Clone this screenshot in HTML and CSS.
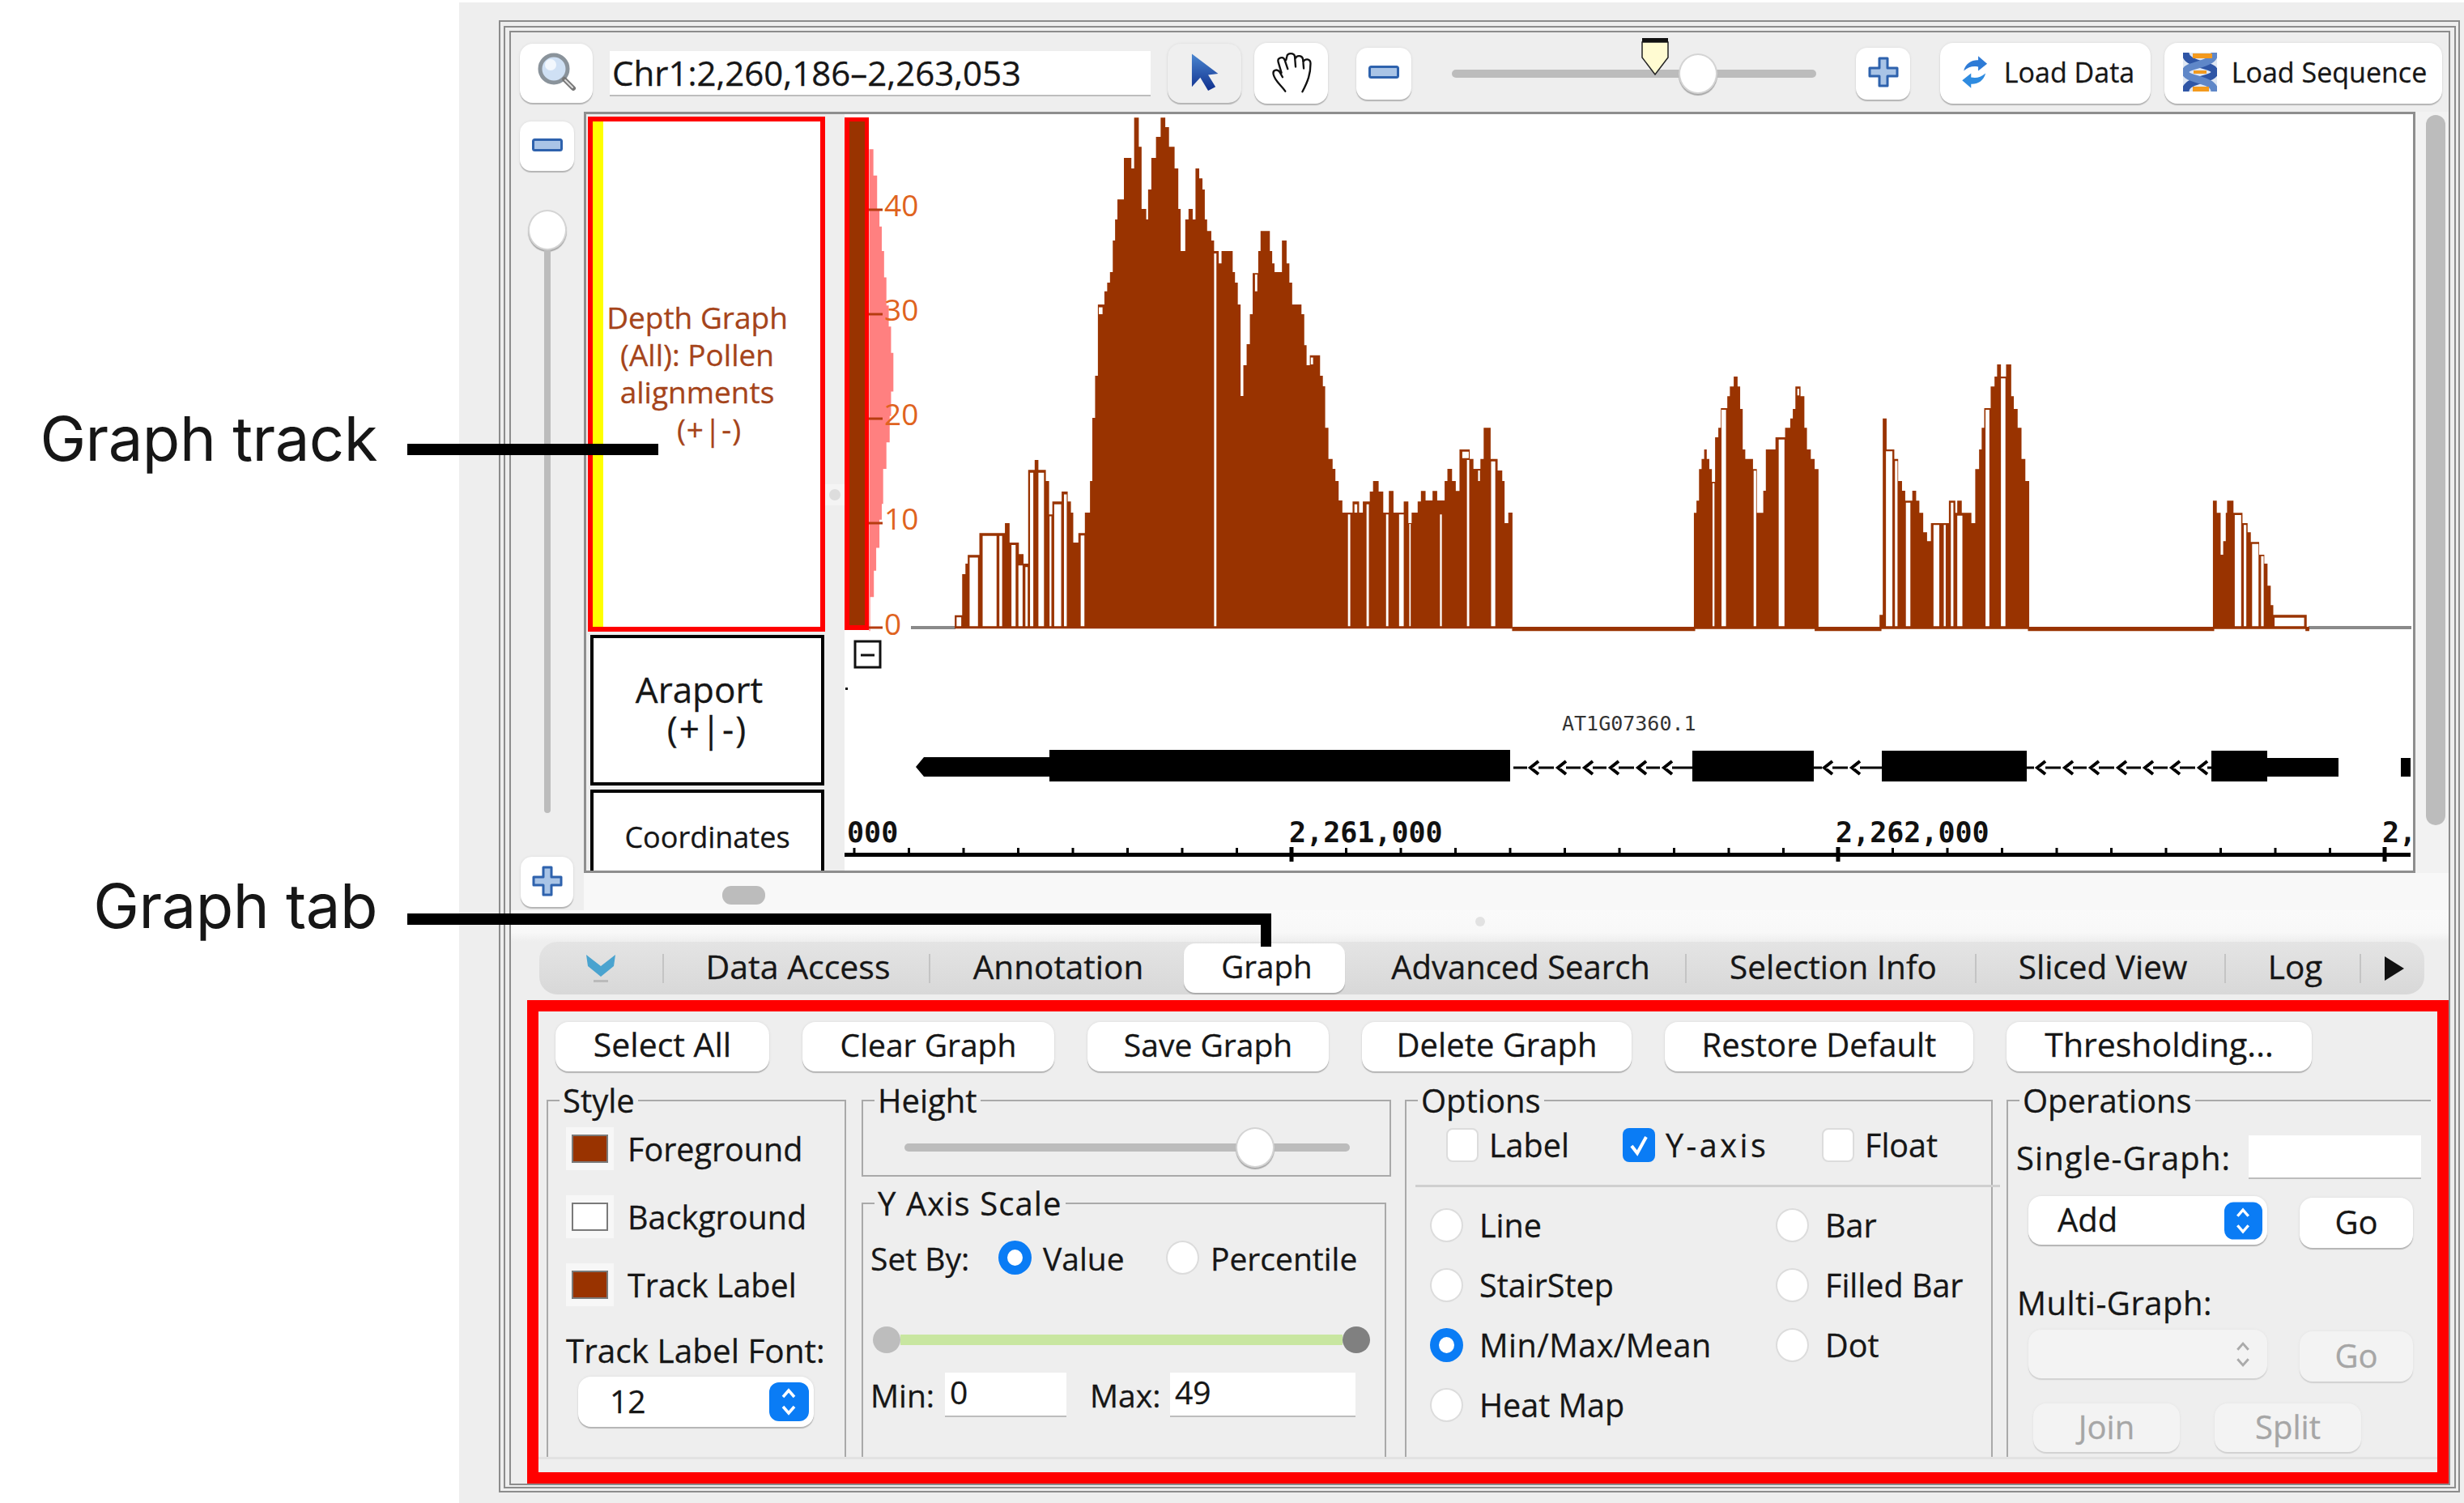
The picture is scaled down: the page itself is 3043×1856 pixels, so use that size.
FILE: index.html
```html
<!DOCTYPE html>
<html lang="en">
<head>
    <meta charset="UTF-8">
    <title>Graph tab</title>
    <link rel="stylesheet" href="styles.css">
</head>
<body>
    <div class="notes">
        <div class="note note-track">Graph track</div>
        <div class="note note-tab">Graph tab</div>
    </div>

    <div class="app">
        <div class="frame-outer">
            <div class="frame-mid">
                <div class="frame-inner">

                    <div class="toolbar">
                        <button class="btn btn-zoom">
                            <svg width="52" height="48" viewBox="0 0 52 48">
                                <circle cx="23" cy="20" r="17" fill="#cfe0f4" stroke="#8a939b" stroke-width="5"/>
                                <circle cx="19" cy="15" r="7" fill="#f2f7fd"/>
                                <path d="M36 33l11 11" stroke="#777" stroke-width="6" stroke-linecap="round"/>
                                <path d="M37 34l9 9" stroke="#ddd" stroke-width="2" stroke-linecap="round"/>
                            </svg>
                        </button>
                        <div class="text-field field-location">Chr1:2,260,186–2,263,053</div>
                        <button class="btn btn-pointer">
                            <svg width="38" height="48" viewBox="120 75 115 148">
                                <defs>
                                    <linearGradient id="pointerFill" x1="0" y1="0" x2="0" y2="1">
                                        <stop offset="0" stop-color="#4a86d0"/>
                                        <stop offset="1" stop-color="#10308e"/>
                                    </linearGradient>
                                </defs>
                                <path d="M128 80V205L160 170 190 220 218 205 190 160 228 155Z" fill="url(#pointerFill)"/>
                            </svg>
                        </button>
                        <button class="btn btn-hand">
                            <svg width="54" height="52" viewBox="415 72 160 155">
                                <path d="M472 220C456 196 432 182 428 156 426 140 444 138 452 150L462 168M458 152L446 112C442 96 465 90 470 105L481 138M475 105L478 92C480 78 505 78 507 92L510 130M510 98C515 86 535 88 537 102L540 136M538 112C545 98 565 100 565 118 565 156 556 182 535 222" fill="none" stroke="#111" stroke-width="7" stroke-linecap="round"/>
                            </svg>
                        </button>
                        <button class="btn btn-step btn-zoom-out">
                            <svg class="icon-minus" width="38" height="16" viewBox="0 0 38 16"><rect x="1.5" y="1.5" width="35" height="13" rx="2" fill="#a9c4e6" stroke="#2e62ad" stroke-width="3"/></svg>
                        </button>
                        <div class="zoom-slider">
                            <div class="slider-track"></div>
                            <svg class="zoom-marker" width="34" height="46" viewBox="0 0 34 46"><path d="M1 5H33V24L17 45 1 24Z" fill="#fffbd2" stroke="#222" stroke-width="1.5"/><rect x="1" width="32" height="5" fill="#111"/></svg>
                            <div class="slider-thumb zoom-thumb"></div>
                        </div>
                        <button class="btn btn-step btn-zoom-in">
                            <svg class="icon-plus" width="38" height="38" viewBox="0 0 38 38"><path d="M14 2H24V14H36V24H24V36H14V24H2V14H14Z" fill="#a9c4e6" stroke="#2e62ad" stroke-width="3" stroke-linejoin="round"/></svg>
                        </button>
                        <button class="btn btn-load-data">
                            <svg width="33" height="42" viewBox="130 90 105 130">
                                <path d="M140 150C148 118 175 106 197 108L197 92 232 122 197 150 197 134C175 130 160 134 140 150Z" fill="#2e7bd6"/>
                                <path d="M226 160C218 192 191 204 169 202L169 218 134 188 169 160 169 176C191 180 206 176 226 160Z" fill="#2e8be0"/>
                            </svg>
                            Load Data
                        </button>
                        <button class="btn btn-load-seq">
                            <svg width="42" height="48" viewBox="0 0 42 48">
                                <rect width="42" height="48" fill="#dfe7f3"/>
                                <path d="M3 0C3 16 39 14 39 24S3 32 3 48" fill="none" stroke="#2f56a6" stroke-width="9"/>
                                <path d="M39 0C39 16 3 14 3 24S39 32 39 48" fill="none" stroke="#5f87c8" stroke-width="9"/>
                                <path d="M12 4H36M12 45H32" stroke="#f39a1e" stroke-width="6"/>
                                <path d="M13 24H29" stroke="#f39a1e" stroke-width="4"/>
                            </svg>
                            Load Sequence
                        </button>
                    </div>

                    <div class="main">
                        <div class="zoom-col">
                            <button class="btn btn-step btn-v-minus">
                                <svg width="38" height="16" viewBox="0 0 38 16"><rect x="1.5" y="1.5" width="35" height="13" rx="2" fill="#a9c4e6" stroke="#2e62ad" stroke-width="3"/></svg>
                            </button>
                            <div class="slider-thumb v-thumb"></div>
                            <div class="v-track"></div>
                            <button class="btn btn-step btn-v-plus">
                                <svg width="38" height="38" viewBox="0 0 38 38"><path d="M14 2H24V14H36V24H24V36H14V24H2V14H14Z" fill="#a9c4e6" stroke="#2e62ad" stroke-width="3" stroke-linejoin="round"/></svg>
                            </button>
                        </div>

                        <div class="view-col">
                            <div class="view-row">
                                <div class="view">
                                    <div class="labels">
                                        <div class="track-label graph-label">
                                            <div class="label-strip"></div>
                                            <div class="graph-label-text">
                                                Depth Graph<br>
                                                (All): Pollen<br>
                                                alignments<br>
                                                <span class="plus-minus">(+|-)</span>
                                            </div>
                                        </div>
                                        <div class="track-label araport-label">
                                            <div><span class="araport-name">Araport</span><br><span class="araport-strand">(+|-)</span></div>
                                        </div>
                                        <div class="track-label coords-label">Coordinates</div>
                                    </div>
                                    <div class="gutter"><div class="gutter-thumb"><i></i></div></div>

                                    <svg class="tracks" width="1937" height="934" viewBox="1043 141 1937 934">
                                        <!-- y axis bar and pink histogram -->
                                        <g transform="translate(1000 130) scale(0.574 0.4337)">
                                            <path fill="#ff8080" d="M128 35V125H137V200H145V295H150V345H155V415H160V490H165V570H170V630H175V705H180V815H175V885H172V960H165V1035H158V1135H155V1180H150V1260H143V1325H138V1400H130V1497H128Z"/>
                                        </g>
                                        <rect x="1043" y="145" width="30" height="633" fill="#ff0000"/>
                                        <rect x="1049" y="150" width="19" height="622" fill="#993300"/>
                                        <path d="M1073 259h17M1073 388h17M1073 517h17M1073 646h17M1073 775h17" stroke="#b63c10" stroke-width="3"/>
                                        <g class="axis-nums">
                                            <text x="1092" y="267">40</text>
                                            <text x="1092" y="396">30</text>
                                            <text x="1092" y="525">20</text>
                                            <text x="1092" y="654">10</text>
                                            <text x="1092" y="784">0</text>
                                        </g>

                                        <!-- depth graph -->
                                        <path d="M1125 775H1180M2851 775H2978" stroke="#8a8a8a" stroke-width="4"/>
                                        <g transform="translate(1000 130) scale(0.574 0.4337)">
                                            <path fill="#993300" d="M312 1490V1452H328V1335H335V1305H340V1280H365V1218H420V1190H430V1245H450V1278H460V1305H470V1038H484V1010H492V1038H508V1070H515V1165H522V1128H542V1100H555V1128H562V1160H567V1245H578V1218H592V1160H603V1070H608V890H614V770H620V567H634V530H640V505H646V475H652V385H657V325H662V268H676V150H692V180H698V35H708V118H714V295H724V325H728V240H735V150H745V90H755V35H765V62H773V118H785V180H793V295H798V415H808V325H815V295H824V325H830V180H838V208H845V240H850V325H855V358H864V385H870V415H880V450H886V415H910V475H915V505H921V567H927V828H933V740H940V680H947V595H953V478H965V415H970V358H990V415H995V450H1000V475H1016V385H1026V450H1032V505H1038V567H1058V595H1064V683H1069V740H1076V712H1098V770H1104V800H1109V918H1116V1007H1125V1035H1131V1070H1138V1125H1146V1160H1168V1128H1182V1160H1190V1128H1205V1100H1212V1070H1224V1100H1234V1160H1246V1098H1256V1160H1278V1128H1288V1190H1295V1160H1308V1128H1315V1098H1325V1125H1340V1098H1350V1125H1366V1070H1372V1035H1382V1070H1390V1098H1398V980H1420V1007H1428V1035H1443V1007H1450V918H1465V1007H1480V1040H1490V1070H1495V1190H1503V1160H1512V1490Z"/>
                                            <path fill="#fff" d="M316 1458H326V1483H316ZM344 1288H362V1483H344ZM372 1226H402V1483H372ZM408 1226H414V1483H408ZM434 1252H443V1483H434ZM449 1310H458V1483H449ZM464 1315H469V1483H464ZM474 1046H481V1483H474ZM492 1046H504V1483H492ZM516 1170H520V1483H516ZM526 1136H541V1483H526ZM547 1108H553V1483H547ZM583 1225H591V1483H583ZM622 575H630V595H622ZM870 422H875V1483H870ZM958 482H963V530H958ZM1078 718H1083V738H1078ZM1158 1165H1163V1483H1158ZM1172 1136H1178V1160H1172ZM1186 1136H1190V1160H1186ZM1198 1136H1203V1483H1198ZM1240 1165H1245V1483H1240ZM1268 1165H1278V1483H1268ZM1290 1192H1293V1483H1290ZM1356 1165H1360V1483H1356ZM1404 986H1418V1005H1404ZM1414 1010H1419V1483H1414ZM1466 1014H1475V1483H1466ZM1438 1040H1442V1070H1438Z"/>
                                        </g>
                                        <g transform="translate(1800 420) scale(0.7933 0.3333)">
                                            <path fill="#993300" d="M85 1062H1326V1070H85ZM85 1062H370V1078H85ZM556 1062H660V1078H556ZM888 1062H1178V1078H888ZM1320 1062H1326V1078H1320Z"/>
                                            <path fill="#993300" d="M368 1068V640H372V595H376V478H380V440H384V405H388V440H392V478H396V525H401V360H406V325H410V252H420V208H424V172H430V135H436V172H440V255H444V405H448V440H460V478H466V640H476V558H480V405H495V360H510V325H518V290H522V255H526V172H534V208H540V325H544V405H550V440H556V478H562V1068Z"/>
                                            <path fill="#993300" d="M657 1068V1018H662V290H668V405H680V440H686V522H692V558H697V595H708V558H714V595H719V640H725V712H731V745H737V678H765V595H775V640H778V595H785V640H800V678H806V478H812V405H816V325H820V252H830V172H836V135H840V90H846V135H854V90H862V208H866V255H872V325H878V440H884V522H890V1068Z"/>
                                            <path fill="#993300" d="M1176 1068V595H1182V640H1188V795H1192V745H1196V640H1198V595H1208V640H1222V678H1230V712H1235V748H1248V795H1256V828H1261V910H1266V982H1270V1018H1322V1068Z"/>
                                            <path fill="#fff" d="M397 530H400V1060H397ZM411 258H418V1060H411ZM461 484H465V1060H461ZM500 368H509V1060H500ZM529 180H532V205H529ZM667 412H677V1060H667ZM681 448H685V1060H681ZM698 602H705V1060H698ZM741 685H750V1060H741ZM757 685H760V1060H757ZM768 602H772V1060H768ZM778 650H786V1060H778ZM822 258H828V1060H822ZM846 142H853V1060H846ZM1210 648H1220V1060H1210ZM1224 685H1228V1060H1224ZM1237 755H1247V1060H1237ZM1251 800H1255V1060H1251ZM1272 1028H1318V1060H1272Z"/>
                                        </g>

                                        <!-- gene track -->
                                        <rect x="1056" y="792" width="31" height="32" fill="#fff" stroke="#111" stroke-width="3"/>
                                        <path d="M1063 809H1080" stroke="#111" stroke-width="3"/>
                                        <rect x="1044" y="849" width="3" height="3" fill="#111"/>
                                        <text class="gene-name" x="1929" y="902">AT1G07360.1</text>
                                        <path d="M1131 947L1141 935H1296V926H1865V965H1296V959H1141ZM2090 927H2240V965H2090ZM2324 927H2503V965H2324ZM2731 927H2800V936H2888V959H2800V965H2731ZM2965 936H2977V959H2965Z" fill="#000"/>
                                        <path stroke="#000" stroke-width="3" d="M1869 948H1886M1900 948H1919M1934 948H1952M1967 948H1984M1999 948H2018M2033 948H2050M2065 948H2090M2240 948H2250M2263 948H2282M2297 948H2324M2503 948H2512M2526 948H2545M2560 948H2577M2592 948H2611M2626 948H2644M2659 948H2677M2692 948H2711M2726 948H2731"/>
                                        <path fill="none" stroke="#000" stroke-width="4" d="M1900 940l-10 8 10 8M1934 940l-10 8 10 8M1967 940l-10 8 10 8M1999 940l-10 8 10 8M2033 940l-10 8 10 8M2065 940l-10 8 10 8M2263 940l-10 8 10 8M2297 940l-10 8 10 8M2526 940l-10 8 10 8M2560 940l-10 8 10 8M2592 940l-10 8 10 8M2626 940l-10 8 10 8M2659 940l-10 8 10 8M2692 940l-10 8 10 8M2726 940l-10 8 10 8"/>

                                        <!-- coordinate ruler -->
                                        <g class="ruler-nums">
                                            <text x="1046" y="1040">000</text>
                                            <text x="1592" y="1040">2,261,000</text>
                                            <text x="2267" y="1040">2,262,000</text>
                                            <text x="2942" y="1040">2,</text>
                                        </g>
                                        <rect x="1043" y="1053" width="1934" height="5" fill="#000"/>
                                        <path stroke="#000" stroke-width="3" d="M1055 1047v6M1122.500 1047v6M1190 1047v6M1257.500 1047v6M1325 1047v6M1392.500 1047v6M1460 1047v6M1527.500 1047v6M1662.500 1047v6M1730 1047v6M1797.500 1047v6M1865 1047v6M1932.500 1047v6M2000 1047v6M2067.500 1047v6M2135 1047v6M2202.500 1047v6M2337.500 1047v6M2405 1047v6M2472.500 1047v6M2540 1047v6M2607.500 1047v6M2675 1047v6M2742.500 1047v6M2810 1047v6M2877.500 1047v6"/>
                                        <path stroke="#000" stroke-width="5" d="M1595 1046v18M2270 1046v18M2945 1046v18"/>
                                    </svg>
                                </div>
                                <div class="v-scroll"><div class="v-scroll-thumb"></div></div>
                            </div>
                            <div class="h-scroll"><div class="h-scroll-thumb"></div></div>
                        </div>
                    </div>

                    <div class="splitter"><i></i></div>

                    <div class="tabs">
                        <div class="tab tab-chevron">
                            <svg width="36" height="34" viewBox="0 0 36 34"><path d="M0 0L18 14 36 0 34 14 18 27 2 14Z" fill="#4aa3cf"/><rect x="9" y="31" width="18" height="3" fill="#bbb"/></svg>
                        </div>
                        <i class="tab-sep"></i>
                        <div class="tab tab-data">Data Access</div>
                        <i class="tab-sep"></i>
                        <div class="tab tab-annotation">Annotation</div>
                        <div class="tab tab-graph">Graph</div>
                        <div class="tab tab-search">Advanced Search</div>
                        <i class="tab-sep"></i>
                        <div class="tab tab-selection">Selection Info</div>
                        <i class="tab-sep"></i>
                        <div class="tab tab-sliced">Sliced View</div>
                        <i class="tab-sep"></i>
                        <div class="tab tab-log">Log</div>
                        <i class="tab-sep"></i>
                        <div class="tab tab-more">
                            <svg width="24" height="30" viewBox="0 0 24 30"><path d="M0 0L24 15 0 30Z" fill="#111"/></svg>
                        </div>
                    </div>

                    <div class="graph-panel">
                        <div class="graph-actions">
                            <button class="btn action-select">Select All</button>
                            <button class="btn action-clear">Clear Graph</button>
                            <button class="btn action-save">Save Graph</button>
                            <button class="btn action-delete">Delete Graph</button>
                            <button class="btn action-restore">Restore Default</button>
                            <button class="btn action-threshold">Thresholding...</button>
                        </div>

                        <div class="graph-groups">
                            <fieldset class="group group-style">
                                <legend>Style</legend>
                                <div class="swatch-row">
                                    <div class="swatch"><i class="swatch-brown"></i></div>
                                    <span>Foreground</span>
                                </div>
                                <div class="swatch-row">
                                    <div class="swatch"><i class="swatch-white"></i></div>
                                    <span>Background</span>
                                </div>
                                <div class="swatch-row">
                                    <div class="swatch"><i class="swatch-brown"></i></div>
                                    <span>Track Label</span>
                                </div>
                                <div class="font-label">Track Label Font:</div>
                                <div class="select select-font">
                                    <span>12</span>
                                    <svg class="stepper" width="49" height="48" viewBox="0 0 49 48"><rect width="49" height="48" rx="12" fill="#0a7cf5"/><path d="M17 18l7-8 7 8M17 30l7 8 7-8" fill="none" stroke="#fff" stroke-width="3.500"/></svg>
                                </div>
                            </fieldset>

                            <div class="group-col">
                                <fieldset class="group group-height">
                                    <legend>Height</legend>
                                    <div class="height-slider">
                                        <div class="slider-track"></div>
                                        <div class="slider-thumb height-thumb"></div>
                                    </div>
                                </fieldset>
                                <fieldset class="group group-yaxis">
                                    <legend>Y Axis Scale</legend>
                                    <div class="setby-row">
                                        <span class="setby-label">Set By:</span>
                                        <i class="radio radio-on"></i>
                                        <span class="setby-value">Value</span>
                                        <i class="radio"></i>
                                        <span class="setby-pct">Percentile</span>
                                    </div>
                                    <div class="range-row">
                                        <i class="range-thumb range-min"></i>
                                        <div class="range-bar"></div>
                                        <i class="range-thumb range-max"></i>
                                    </div>
                                    <div class="minmax-row">
                                        <span class="min-label">Min:</span>
                                        <div class="text-field field-min">0</div>
                                        <span class="max-label">Max:</span>
                                        <div class="text-field field-max">49</div>
                                    </div>
                                </fieldset>
                            </div>

                            <fieldset class="group group-options">
                                <legend>Options</legend>
                                <div class="checks-row">
                                    <i class="checkbox"></i>
                                    <span class="check-text check-label">Label</span>
                                    <i class="checkbox checkbox-on">
                                        <svg width="40" height="42" viewBox="0 0 40 42"><path d="M11 22l7 9 11-20" fill="none" stroke="#fff" stroke-width="4"/></svg>
                                    </i>
                                    <span class="check-text check-yaxis">Y-axis</span>
                                    <i class="checkbox"></i>
                                    <span class="check-text">Float</span>
                                </div>
                                <div class="divider"></div>
                                <div class="radio-grid">
                                    <div class="radio-item"><i class="radio"></i><span>Line</span></div>
                                    <div class="radio-item"><i class="radio"></i><span>Bar</span></div>
                                    <div class="radio-item"><i class="radio"></i><span>StairStep</span></div>
                                    <div class="radio-item"><i class="radio"></i><span>Filled Bar</span></div>
                                    <div class="radio-item"><i class="radio radio-on"></i><span class="mean-label">Min/Max/Mean</span></div>
                                    <div class="radio-item"><i class="radio"></i><span>Dot</span></div>
                                    <div class="radio-item"><i class="radio"></i><span>Heat Map</span></div>
                                </div>
                            </fieldset>

                            <fieldset class="group group-ops">
                                <legend>Operations</legend>
                                <div class="single-row">
                                    <span class="single-label">Single-Graph:</span>
                                    <div class="text-field field-single"></div>
                                </div>
                                <div class="ops-row ops-add">
                                    <div class="select select-op">
                                        <span>Add</span>
                                        <svg class="stepper" width="47" height="47" viewBox="0 0 49 48"><rect width="49" height="48" rx="12" fill="#0a7cf5"/><path d="M17 18l7-8 7 8M17 30l7 8 7-8" fill="none" stroke="#fff" stroke-width="3.500"/></svg>
                                    </div>
                                    <button class="btn btn-go">Go</button>
                                </div>
                                <div class="multi-label">Multi-Graph:</div>
                                <div class="ops-row ops-multi">
                                    <div class="select select-op select-off">
                                        <svg class="stepper" width="47" height="47" viewBox="0 0 49 48"><path d="M17 18l7-8 7 8M17 30l7 8 7-8" fill="none" stroke="#aaa" stroke-width="3"/></svg>
                                    </div>
                                    <button class="btn btn-go btn-off">Go</button>
                                </div>
                                <div class="ops-row ops-join">
                                    <button class="btn btn-off btn-join">Join</button>
                                    <button class="btn btn-off btn-split">Split</button>
                                </div>
                            </fieldset>
                        </div>
                    </div>

                </div>
            </div>
        </div>
    </div>

    <!-- callout lines laid over the screenshot -->
    <div class="callout callout-track"></div>
    <div class="callout callout-tab"></div>
    <div class="callout callout-tab-drop"></div>
</body>
</html>
```

FILE: styles.css
```css
:root {
    --ui-font: "Open Sans", "Noto Sans", sans-serif;
    --panel-color: #eeeeee;
    --frame-line: #8c8c8c;
    --group-line: #a9a9a9;
    --text-color: #161616;
    --brown: #993300;
    --red: #ff0000;
    --blue: #0a7cf5;
    --track-grey: #bcbcbc;
}

* {
    margin: 0;
    padding: 0;
    box-sizing: border-box;
}

body {
    display: flex;
    width: 3043px;
    height: 1856px;
    overflow: hidden;
    background: white;
    color: var(--text-color);
    font-family: var(--ui-font);
    font-size: 40px;
    position: relative;
    -webkit-text-stroke: 0.3px currentColor;
}

/* left hand labels */
.notes {
    width: 567px;
    flex: none;
    display: flex;
    flex-direction: column;
    align-items: flex-end;
    padding: 491px 101px 0 0;
    font-family: Inter, "Liberation Sans", sans-serif;
    -webkit-text-stroke: 0;
}

.note {
    font-size: 76px;
    line-height: 100px;
    letter-spacing: -0.5px;
    white-space: nowrap;
}

.note-tab {
    margin-top: 477px;
}

.callout {
    position: absolute;
    background: black;
}

.callout-track {
    left: 503px;
    top: 548px;
    width: 310px;
    height: 14px;
}

.callout-tab {
    left: 503px;
    top: 1128px;
    width: 1067px;
    height: 14px;
}

.callout-tab-drop {
    left: 1557px;
    top: 1128px;
    width: 13px;
    height: 41px;
}

/* window frame */
.app {
    flex: 1;
    margin-top: 3px;
    padding: 22px 5px 13px 49px;
    background: var(--panel-color);
}

.frame-outer {
    height: 100%;
    border: 2px solid var(--frame-line);
    padding: 5px 3px 3px 4px;
}

.frame-mid {
    height: 100%;
    border: 2px solid var(--frame-line);
    padding: 4px 5px 2px 5px;
}

.frame-inner {
    height: 100%;
    border: 2px solid var(--frame-line);
    display: flex;
    flex-direction: column;
}

/* shared controls */
.btn {
    display: flex;
    align-items: center;
    justify-content: center;
    flex: none;
    padding-bottom: 3px;
    background: white;
    border: none;
    border-radius: 16px;
    box-shadow: 0 2px 1px #b5b5b5, 0 0 3px #d8d8d8;
    color: var(--text-color);
    font-family: var(--ui-font);
    font-size: 40px;
    white-space: nowrap;
}

.btn-off {
    background: #f3f3f3;
    color: #a6a6a6;
    box-shadow: 0 2px 1px #d2d2d2, 0 0 3px #e2e2e2;
}

.text-field {
    background: white;
    border-bottom: 2px solid #bdbdbd;
    white-space: nowrap;
}

.slider-track {
    height: 10px;
    background: var(--track-grey);
    border-radius: 5px;
}

.slider-thumb {
    width: 48px;
    height: 50px;
    border-radius: 50%;
    background: white;
    border: 2px solid #d4d4d4;
    box-shadow: 0 2px 1px #a8a8a8;
}

.radio {
    display: block;
    flex: none;
    width: 41px;
    height: 42px;
    border-radius: 50%;
    background: white;
    border: 2px solid #dcdcdc;
}

.radio-on {
    border: 11px solid var(--blue);
}

.checkbox {
    display: block;
    flex: none;
    width: 40px;
    height: 42px;
    border-radius: 8px;
    background: white;
    border: 2px solid #dcdcdc;
}

.checkbox-on {
    background: var(--blue);
    border: none;
}

.select {
    display: flex;
    align-items: center;
    justify-content: space-between;
    flex: none;
    background: white;
    border-radius: 16px;
    box-shadow: 0 2px 1px #b5b5b5, 0 0 3px #d8d8d8;
}

.select span {
    padding-bottom: 4px;
}

/* top toolbar */
.toolbar {
    display: flex;
    align-items: center;
    height: 98px;
    flex: none;
    padding: 3px 0 0 11px;
}

.btn-zoom {
    width: 90px;
    height: 73px;
}

.field-location {
    width: 668px;
    height: 56px;
    margin-left: 21px;
    padding-left: 3px;
    font-size: 42px;
    line-height: 53px;
}

.btn-pointer {
    width: 91px;
    height: 73px;
    margin-left: 21px;
    background: #efefef;
}

.btn-hand {
    width: 91px;
    height: 75px;
    margin-left: 16px;
}

.btn-step {
    border-radius: 14px;
}

.btn-zoom-out {
    width: 68px;
    height: 64px;
    margin-left: 35px;
}

.zoom-slider {
    position: relative;
    display: flex;
    flex-direction: column;
    justify-content: center;
    width: 450px;
    height: 50px;
    margin-left: 50px;
}

.zoom-marker {
    position: absolute;
    left: 234px;
    top: -19px;
}

.zoom-thumb {
    position: absolute;
    left: 280px;
    top: 0;
}

.btn-zoom-in {
    width: 67px;
    height: 64px;
    margin-left: 49px;
}

.btn-load-data {
    width: 260px;
    height: 75px;
    margin-left: 37px;
    gap: 20px;
    padding-left: 6px;
    font-size: 34px;
}

.btn-load-seq {
    width: 343px;
    height: 75px;
    margin-left: 17px;
    gap: 18px;
    padding-left: 4px;
    font-size: 34px;
}

/* browser area */
.main {
    display: flex;
    height: 986px;
    flex: none;
}

.zoom-col {
    width: 90px;
    flex: none;
    display: flex;
    flex-direction: column;
}

.btn-v-minus {
    width: 67px;
    height: 61px;
    margin: 12px 0 0 11px;
}

.v-thumb {
    margin: 48px 0 0 21px;
}

.v-track {
    width: 8px;
    height: 695px;
    margin-left: 41px;
    background: var(--track-grey);
    border-radius: 0 0 4px 4px;
}

.btn-v-plus {
    width: 65px;
    height: 62px;
    margin: 54px 0 0 12px;
}

.view-col {
    flex: 1;
    display: flex;
    flex-direction: column;
}

.view-row {
    display: flex;
    height: 940px;
}

.view {
    display: flex;
    width: 2262px;
    height: 940px;
    border: 3px solid #8e8e8e;
    background: white;
}

.labels {
    width: 295px;
    flex: none;
    display: flex;
    flex-direction: column;
    padding: 3px 0 0 2px;
    background: var(--panel-color);
}

.track-label {
    background: white;
    text-align: center;
}

.graph-label {
    display: flex;
    width: 293px;
    height: 636px;
    border: 6px solid var(--red);
    color: #a5441a;
    font-size: 37px;
    line-height: 46px;
}

.label-strip {
    width: 13px;
    background: #ffff00;
}

.graph-label-text {
    flex: 1;
    padding: 219px 36px 0 0;
    white-space: nowrap;
}

.plus-minus {
    padding-left: 30px;
    letter-spacing: 1px;
}

.araport-label {
    display: flex;
    align-items: center;
    justify-content: center;
    width: 289px;
    height: 186px;
    margin: 4px 0 0 3px;
    padding-bottom: 5px;
    border: 4px solid black;
    font-size: 44px;
    line-height: 48px;
}

.araport-name {
    padding-right: 20px;
}

.araport-strand {
    letter-spacing: 2px;
}

.coords-label {
    width: 289px;
    flex: 1;
    margin: 5px 0 0 3px;
    padding-top: 33px;
    border: 4px solid black;
    border-bottom: none;
    font-size: 36px;
    line-height: 44px;
}

.gutter {
    width: 24px;
    flex: none;
    background: var(--panel-color);
    padding-top: 457px;
}

.gutter-thumb {
    display: flex;
    align-items: center;
    justify-content: center;
    height: 26px;
    background: #f4f4f4;
}

.gutter-thumb i {
    width: 14px;
    height: 14px;
    border-radius: 50%;
    background: #dddddd;
}

.tracks {
    flex: none;
    display: block;
    overflow: visible;
    -webkit-text-stroke: 0;
}

.axis-nums {
    font-family: var(--ui-font);
    font-size: 37px;
    fill: #df6320;
}

.gene-name {
    font-family: "DejaVu Sans Mono", monospace;
    font-size: 25px;
    fill: #333;
}

.ruler-nums {
    font-family: "DejaVu Sans Mono", monospace;
    font-weight: bold;
    font-size: 35px;
    fill: #111;
}

.v-scroll {
    flex: 1;
    padding: 4px 0 0 13px;
    background: #f2f2f2;
}

.v-scroll-thumb {
    width: 24px;
    height: 877px;
    border-radius: 12px;
    background: var(--track-grey);
}

.h-scroll {
    flex: 1;
    background: #f8f8f8;
    padding: 16px 0 0 171px;
}

.h-scroll-thumb {
    width: 53px;
    height: 23px;
    border-radius: 11px;
    background: var(--track-grey);
}

.splitter {
    height: 39px;
    flex: none;
    padding: 8px 0 0 1191px;
    background: linear-gradient(#fafafa 0, #f8f8f8 70%, var(--panel-color) 100%);
}

.splitter i {
    display: block;
    width: 12px;
    height: 12px;
    border-radius: 50%;
    background: #e2e2e2;
}

/* tabs */
.tabs {
    display: flex;
    align-items: center;
    width: 2328px;
    height: 65px;
    flex: none;
    margin-left: 35px;
    border-radius: 22px;
    background: linear-gradient(#e4e4e4, #d8d8d8);
    font-size: 40.5px;
}

.tab {
    display: flex;
    align-items: center;
    justify-content: center;
    height: 100%;
    flex: none;
    padding-bottom: 5px;
    white-space: nowrap;
}

.tab-sep {
    display: block;
    width: 2px;
    height: 36px;
    flex: none;
    background: #c4c4c4;
}

.tab-chevron { width: 152px; padding-bottom: 0; }
.tab-data { width: 327px; padding-left: 4px; font-size: 41px; }
.tab-annotation { width: 313px; padding-left: 3px; }
.tab-search { width: 420px; padding-left: 14px; font-size: 40px; }
.tab-selection { width: 356px; padding-left: 6px; }
.tab-sliced { width: 306px; padding-left: 6px; }
.tab-log { width: 165px; padding-left: 6px; }
.tab-more { width: 74px; padding: 0 0 0 8px; }

.tab-graph {
    width: 199px;
    height: 61px;
    padding-left: 6px;
    background: white;
    border-radius: 14px;
    box-shadow: 0 2px 1px #aaa;
    font-size: 38.500px;
}

/* graph panel */
.graph-panel {
    width: 2373px;
    height: 597px;
    flex: none;
    margin: 7px 0 0 20px;
    border: 14px solid var(--red);
    background: var(--panel-color);
}

.graph-actions {
    display: flex;
    gap: 41px;
    padding: 13px 0 0 21px;
}

.graph-actions .btn {
    height: 61px;
    padding-bottom: 7px;
    font-size: 40px;
}

.graph-actions .action-clear,
.graph-actions .action-save {
    font-size: 39px;
}

.graph-actions .action-select,
.graph-actions .action-threshold {
    font-size: 41px;
}

.action-select { width: 264px; }
.action-clear { width: 311px; }
.action-save { width: 298px; }
.action-delete { width: 333px; }
.action-restore { width: 381px; }
.action-threshold { width: 377px; }

.graph-groups {
    display: flex;
    height: 465px;
    margin-top: 14px;
    padding-left: 10px;
    border-bottom: 3px solid #e2e2e2;
}

.group {
    min-width: 0;
    border: 2px solid var(--group-line);
    border-bottom: none;
    flex: none;
}

.group legend {
    margin-left: 14px;
    padding: 0 4px;
    font-size: 40px;
    line-height: 44px;
}

.group-style {
    width: 370px;
    padding-left: 22px;
}

.group-style legend {
    margin-left: -8px;
}

.swatch-row {
    display: flex;
    align-items: center;
    gap: 17px;
    height: 53px;
    margin-top: 31px;
    font-size: 39.500px;
}

legend + .swatch-row {
    margin-top: 11px;
}

.swatch {
    display: flex;
    align-items: center;
    justify-content: center;
    width: 59px;
    height: 53px;
    background: #f7f7f7;
}

.swatch i {
    display: block;
    width: 45px;
    height: 35px;
    border: 2px solid #7a7a7a;
}

.swatch-brown { background: var(--brown); }
.swatch-white { background: white; }

.font-label {
    margin-top: 33px;
    font-size: 40.500px;
    line-height: 44px;
    white-space: nowrap;
}

.select-font {
    width: 291px;
    height: 62px;
    margin: 10px 0 0 15px;
    padding: 0 6px 0 39px;
    font-size: 39px;
}

.group-col {
    display: flex;
    flex-direction: column;
    width: 654px;
    flex: none;
    margin-left: 19px;
}

.group-height {
    height: 116px;
    border-bottom: 2px solid var(--group-line);
}

.height-slider {
    display: flex;
    position: relative;
    flex-direction: column;
    justify-content: center;
    width: 550px;
    height: 50px;
    margin: 11px 0 0 51px;
}

.height-thumb {
    position: absolute;
    left: 409px;
    top: 0;
}

.group-yaxis {
    width: 648px;
    flex: 1;
    margin-top: 11px;
    font-size: 39px;
}

.group-yaxis legend {
    letter-spacing: 1.1px;
}

.setby-row {
    display: flex;
    align-items: center;
    height: 44px;
    margin-top: 23px;
    padding-left: 9px;
    white-space: nowrap;
}

.setby-label { width: 158px; }
.setby-value { width: 166px; padding-left: 14px; }
.setby-pct { padding-left: 14px; }

.range-row {
    display: flex;
    align-items: center;
    height: 33px;
    margin: 63px 0 0 12px;
}

.range-thumb {
    display: block;
    width: 34px;
    height: 33px;
    border-radius: 50%;
    background: #bdbdbd;
}

.range-max {
    background: #808080;
}

.range-bar {
    width: 546px;
    height: 13px;
    background: #c8e6a0;
}

.minmax-row {
    display: flex;
    align-items: center;
    height: 55px;
    margin-top: 24px;
    padding-left: 9px;
}

.min-label { width: 92px; }
.max-label { width: 99px; margin-left: 29px; }

.field-min {
    width: 150px;
    height: 55px;
    padding-left: 6px;
    line-height: 48px;
}

.field-max {
    width: 229px;
    height: 55px;
    padding-left: 6px;
    line-height: 48px;
}

.group-options {
    width: 726px;
    margin-left: 17px;
    font-size: 39.500px;
}

.checks-row {
    display: flex;
    align-items: center;
    height: 42px;
    margin-top: 12px;
    padding-left: 49px;
}

.check-text { padding-left: 13px; }
.check-label { width: 178px; }
.check-yaxis { width: 206px; letter-spacing: 3.500px; }
.mean-label { letter-spacing: 0.5px; }

.divider {
    width: 722px;
    height: 3px;
    margin: 28px 0 0 11px;
    background: #cfcfcf;
}

.radio-grid {
    display: grid;
    grid-template-columns: 427px 1fr;
    grid-auto-rows: 74px;
    margin-top: 10px;
    padding-left: 29px;
}

.radio-item {
    display: flex;
    align-items: center;
    gap: 20px;
}

.group-ops {
    width: 524px;
    margin-left: 17px;
    border-right: none;
    border-left-width: 2px;
    font-size: 40px;
}

.single-row {
    display: flex;
    align-items: center;
    height: 54px;
    margin-top: 21px;
    padding-left: 10px;
}

.single-label { width: 287px; letter-spacing: 1.100px; }

.field-single {
    width: 213px;
    height: 54px;
}

.ops-row {
    display: flex;
    align-items: flex-start;
    margin-left: 25px;
}

.ops-add {
    margin-top: 21px;
}

.select-op {
    width: 295px;
    height: 60px;
    padding: 0 6px 0 36px;
}

.select-off {
    justify-content: flex-end;
    background: #f3f3f3;
    box-shadow: 0 2px 1px #d2d2d2, 0 0 3px #e2e2e2;
}

.btn-go {
    width: 140px;
    height: 62px;
    margin: 2px 0 0 40px;
}

.multi-label {
    margin-top: 46px;
    padding-left: 11px;
    line-height: 44px;
    letter-spacing: 0.5px;
}

.ops-multi {
    margin-top: 11px;
}

.ops-join {
    gap: 43px;
    margin: 27px 0 0 31px;
}

.btn-join,
.btn-split {
    width: 181px;
    height: 60px;
}
```
